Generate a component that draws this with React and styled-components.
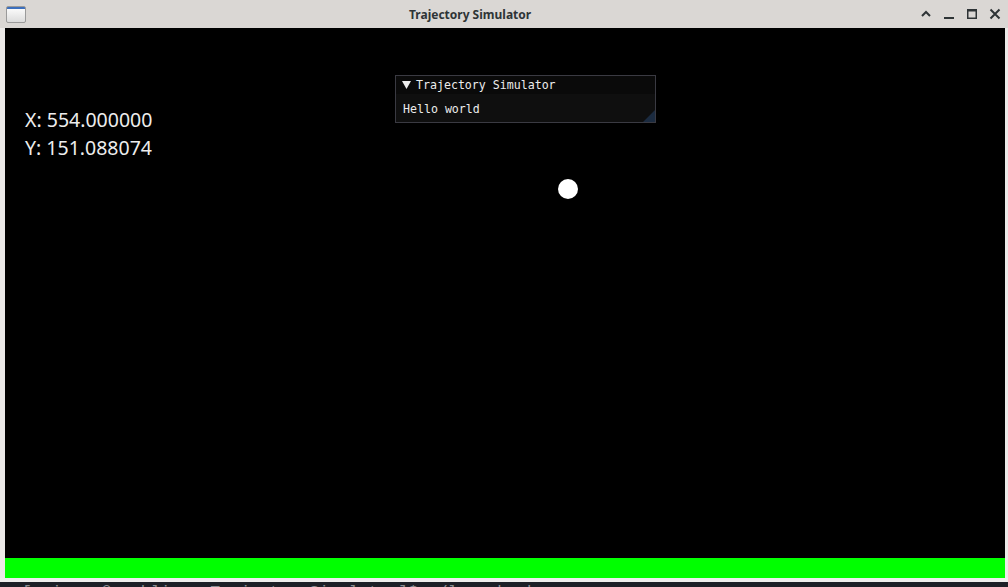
import React from 'react';
import styled, {createGlobalStyle} from 'styled-components';

const Global = createGlobalStyle`
	html, body {
		margin: 0;
		padding: 0;
		background: #eceae8;
		overflow: hidden;
	}
	#root {
		width: 1008px;
		height: 587px;
	}
`;

const Frame = styled.div`
	width: 1008px;
	height: 587px;
	display: flex;
	flex-direction: column;
	background: #eceae8;
	overflow: hidden;
`;

const TitleBar = styled.div`
	height: 28px;
	flex: none;
	display: flex;
	align-items: center;
	background: #dad7d4;
	font-family: "Noto Sans", "DejaVu Sans", sans-serif;
	font-weight: 700;
	font-size: 12px;
	color: #2e3436;
`;

const AppIcon = styled.div`
	margin-left: 6px;
	margin-top: 1px;
	width: 18px;
	height: 15px;
	border: 1px solid #9a9a9a;
	border-radius: 2px;
	background: linear-gradient(#3c6fbd 0 2px, #fafafa 2px, #dcdcdc);
`;

const Title = styled.div`
	margin-left: 383px;
`;

const Controls = styled.div`
	margin-left: auto;
	display: flex;
	align-items: center;
	margin-right: 2px;
`;

const Ctl = styled.div`
	width: 23px;
	height: 28px;
	display: flex;
	align-items: center;
	justify-content: center;
`;

const Body = styled.div`
	display: flex;
	flex-direction: column;
	padding: 0 3px 0 5px;
	flex: none;
`;

const Canvas = styled.div`
	position: relative;
	height: 530px;
	background: #000;
`;

const Readout = styled.div`
	position: absolute;
	left: 20px;
	top: 78px;
	font-family: "Noto Sans", "Open Sans", sans-serif;
	font-size: 19.5px;
	line-height: 28px;
	color: #ededed;
`;

const ImWindow = styled.div`
	position: absolute;
	left: 390px;
	top: 47px;
	width: 259px;
	height: 46px;
	border: 1px solid #3a3a42;
	background: #0f0f0f;
	font-family: "DejaVu Sans Mono", "Liberation Mono", monospace;
	font-size: 11.6px;
	color: #ececec;
	display: flex;
	flex-direction: column;
`;

const ImTitle = styled.div`
	height: 18px;
	background: #0a0a0a;
	display: flex;
	align-items: center;
	padding-left: 6px;
	gap: 5px;
`;

const ImContent = styled.div`
	flex: 1;
	position: relative;
	padding: 8px 0 0 7px;
`;

const Grip = styled.div`
	position: absolute;
	right: 0;
	bottom: 0;
	width: 12px;
	height: 12px;
	background: #1b2b40;
	clip-path: polygon(100% 0, 100% 100%, 0 100%);
`;

const Ball = styled.div`
	position: absolute;
	left: 553px;
	top: 151px;
	width: 20px;
	height: 20px;
	border-radius: 50%;
	background: #fff;
`;

const Ground = styled.div`
	height: 20px;
	background: #00ff00;
`;

const BottomEdge = styled.div`
	height: 4px;
	flex: none;
	background: #efeeed;
`;

const Terminal = styled.div`
	flex: 1;
	background: #1d2027;
	overflow: hidden;
	font-family: "Liberation Mono", "DejaVu Sans Mono", monospace;
	font-size: 16.5px;
	color: #8a8d92;
	white-space: nowrap;
`;

const Prompt = styled.div`
	margin: 1px 0 0 22px;
	line-height: 20px;
`;

function Chevron() {
	return (
		<svg width="12" height="12" viewBox="0 0 12 12">
			<path d="M2 8 L6 4 L10 8" fill="none" stroke="#2e3436" strokeWidth="2"/>
		</svg>
	);
}

function Minimize() {
	return (
		<svg width="12" height="12" viewBox="0 0 12 12">
			<rect x="1" y="9" width="10" height="2" fill="#2e3436"/>
		</svg>
	);
}

function Maximize() {
	return (
		<svg width="12" height="12" viewBox="0 0 12 12">
			<rect x="1.75" y="1.75" width="8.5" height="8.5" fill="none" stroke="#2e3436" strokeWidth="1.5"/>
			<rect x="1" y="1" width="10" height="2.5" fill="#2e3436"/>
		</svg>
	);
}

function Close() {
	return (
		<svg width="12" height="12" viewBox="0 0 12 12">
			<path d="M1.5 1.5 L10.5 10.5 M10.5 1.5 L1.5 10.5" stroke="#2e3436" strokeWidth="2"/>
		</svg>
	);
}

function Arrow() {
	return (
		<svg width="9" height="8" viewBox="0 0 9 8">
			<polygon points="0,0 9,0 4.5,8" fill="#ececec"/>
		</svg>
	);
}

export default function App() {
	const pos = {x: 554.0, y: 151.088074};
	return (
		<Frame>
			<Global/>
			<TitleBar>
				<AppIcon/>
				<Title>Trajectory Simulator</Title>
				<Controls>
					<Ctl><Chevron/></Ctl>
					<Ctl><Minimize/></Ctl>
					<Ctl><Maximize/></Ctl>
					<Ctl><Close/></Ctl>
				</Controls>
			</TitleBar>
			<Body>
				<Canvas>
					<Readout>
						<div>X: {pos.x.toFixed(6)}</div>
						<div>Y: {pos.y.toFixed(6)}</div>
					</Readout>
					<ImWindow>
						<ImTitle><Arrow/>Trajectory Simulator</ImTitle>
						<ImContent>
							Hello world
							<Grip/>
						</ImContent>
					</ImWindow>
					<Ball/>
				</Canvas>
				<Ground/>
			</Body>
			<BottomEdge/>
			<Terminal>
				<Prompt>[epicman@archlinux TrajectorySimulator]$ ./launch.sh</Prompt>
			</Terminal>
		</Frame>
	);
}
